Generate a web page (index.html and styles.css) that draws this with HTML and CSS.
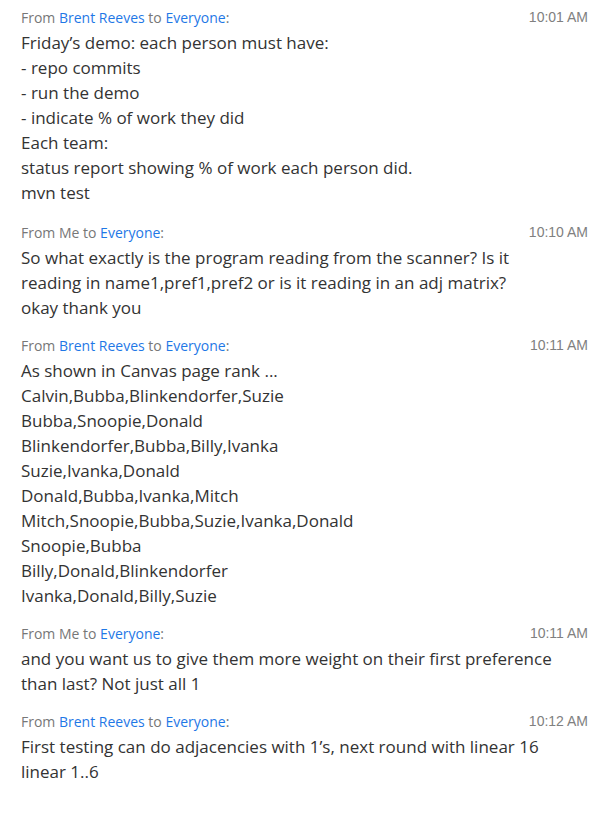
FILE: index.html
```html
<!DOCTYPE html>
<html>
<head>
<meta charset="utf-8">
<link rel="stylesheet" href="styles.css">
</head>
<body>
<div class="chat">
  <div class="msg">
    <div class="head"><span class="meta">From <span class="name">Brent Reeves</span> to <span class="name">Everyone</span>:</span><span class="time">10:01 AM</span></div>
    <div class="body">Friday’s demo: each person must have:<br>- repo commits<br>- run the demo<br>- indicate % of work they did<br>Each team:<br>status report showing % of work each person did.<br>mvn test</div>
  </div>
  <div class="msg">
    <div class="head"><span class="meta">From Me to <span class="name">Everyone</span>:</span><span class="time">10:10 AM</span></div>
    <div class="body">So what exactly is the program reading from the scanner? Is it reading in name1,pref1,pref2 or is it reading in an adj matrix?<br>okay thank you</div>
  </div>
  <div class="msg">
    <div class="head"><span class="meta">From <span class="name">Brent Reeves</span> to <span class="name">Everyone</span>:</span><span class="time">10:11 AM</span></div>
    <div class="body">As shown in Canvas page rank ...<br>Calvin,Bubba,Blinkendorfer,Suzie<br>Bubba,Snoopie,Donald<br>Blinkendorfer,Bubba,Billy,Ivanka<br>Suzie,Ivanka,Donald<br>Donald,Bubba,Ivanka,Mitch<br>Mitch,Snoopie,Bubba,Suzie,Ivanka,Donald<br>Snoopie,Bubba<br>Billy,Donald,Blinkendorfer<br>Ivanka,Donald,Billy,Suzie</div>
  </div>
  <div class="msg">
    <div class="head"><span class="meta">From Me to <span class="name">Everyone</span>:</span><span class="time">10:11 AM</span></div>
    <div class="body">and you want us to give them more weight on their first preference than last? Not just all 1</div>
  </div>
  <div class="msg">
    <div class="head"><span class="meta">From <span class="name">Brent Reeves</span> to <span class="name">Everyone</span>:</span><span class="time">10:12 AM</span></div>
    <div class="body">First testing can do adjacencies with 1’s, next round with linear 16 linear 1..6</div>
  </div>
</div>
</body>
</html>
```
FILE: styles.css
```css
html, body {
  margin: 0;
  padding: 0;
  background: #ffffff;
}
.chat {
  padding: 7px 10px 0 21px;
  display: flex;
  flex-direction: column;
  gap: 15px;
}
.msg:first-child {
  margin-bottom: 2px;
}
.head {
  display: flex;
  justify-content: space-between;
  align-items: center;
  height: 20px;
  margin-bottom: 3px;
}
.meta {
  font-family: "Open Sans", sans-serif;
  font-size: 14px;
  color: #777777;
}
.name {
  color: #1f78e6;
}
.time {
  font-family: "Liberation Sans", Arial, sans-serif;
  font-size: 14px;
  color: #808080;
}
.body {
  font-family: "Open Sans", sans-serif;
  font-size: 17px;
  line-height: 25px;
  color: #333333;
  padding-right: 30px;
}
```
